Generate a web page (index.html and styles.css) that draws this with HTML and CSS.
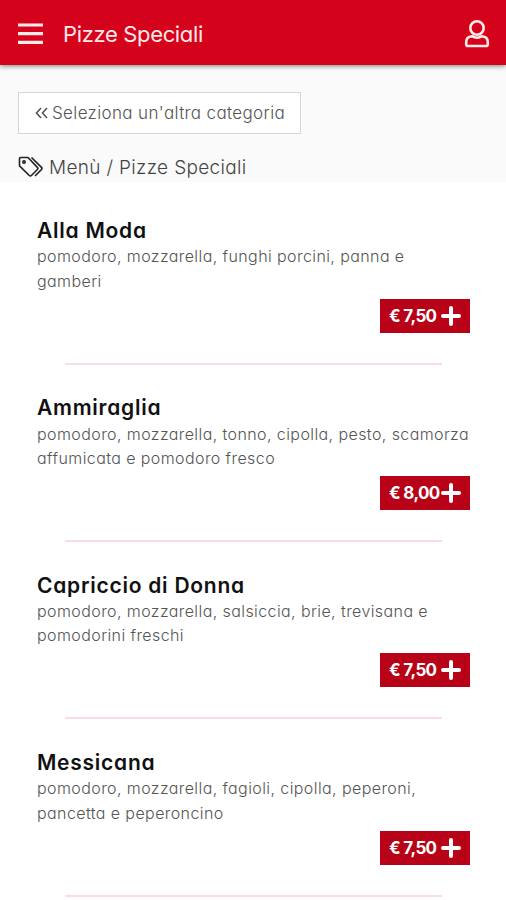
FILE: index.html
```html
<!DOCTYPE html>
<html lang="it">
<head>
<meta charset="UTF-8">
<meta name="viewport" content="width=device-width, initial-scale=1.0">
<title>Pizze Speciali</title>
<link rel="stylesheet" href="styles.css">
</head>
<body>
<header class="navbar">
  <svg class="icon-menu" viewBox="0 0 25 22"><path d="M0 2h25M0 10.7h25M0 19.4h25"/></svg>
  <h1>Pizze Speciali</h1>
  <svg class="icon-user" viewBox="0 0 26 30"><circle cx="13" cy="9" r="6.700"/><path d="M8 17.200C4.500 17.500 2.200 19.700 2.200 23v2.200c0 1.200.6 1.800 1.800 1.800h18c1.200 0 1.800-.6 1.800-1.800V23c0-3.300-2.300-5.500-5.800-5.800-3 1.800-7 1.800-10 0z"/></svg>
</header>
<div class="top">
  <a class="back" href="#"><svg class="icon-back" viewBox="0 0 13 12"><path d="M6 1L1.500 6 6 11M12 1L7.500 6l4.500 5"/></svg><span>Seleziona un'altra categoria</span></a>
  <div class="breadcrumb">
    <svg class="icon-tags" viewBox="0 0 26 22"><path d="M1.500 2.500v7.300L11.300 19.500c.7.7 1.400.7 2.100 0l6-6c.7-.7.7-1.400 0-2.100L10 1.500H2.500c-.7 0-1 .3-1 1z"/><path d="M13.500 1.500l10 9.900c.7.7.7 1.400 0 2.100L17 20"/><circle cx="6" cy="6" r="1.200"/></svg>
    <span>Menù / Pizze Speciali</span>
  </div>
</div>
<main class="menu">
  <div class="item">
    <h2>Alla Moda</h2>
    <p>pomodoro, mozzarella, funghi porcini, panna e<br>gamberi</p>
    <button class="price"><span>€ 7,50</span><svg class="icon-plus" viewBox="0 0 20 20"><path d="M10 2v16M2 10h16"/></svg></button>
  </div>
  <div class="item">
    <h2>Ammiraglia</h2>
    <p>pomodoro, mozzarella, tonno, cipolla, pesto, scamorza<br>affumicata e pomodoro fresco</p>
    <button class="price"><span>€ 8,00</span><svg class="icon-plus" viewBox="0 0 20 20"><path d="M10 2v16M2 10h16"/></svg></button>
  </div>
  <div class="item">
    <h2>Capriccio di Donna</h2>
    <p>pomodoro, mozzarella, salsiccia, brie, trevisana e<br>pomodorini freschi</p>
    <button class="price"><span>€ 7,50</span><svg class="icon-plus" viewBox="0 0 20 20"><path d="M10 2v16M2 10h16"/></svg></button>
  </div>
  <div class="item">
    <h2>Messicana</h2>
    <p>pomodoro, mozzarella, fagioli, cipolla, peperoni,<br>pancetta e peperoncino</p>
    <button class="price"><span>€ 7,50</span><svg class="icon-plus" viewBox="0 0 20 20"><path d="M10 2v16M2 10h16"/></svg></button>
  </div>
</main>
</body>
</html>
```
FILE: styles.css
```css
* {
  box-sizing: border-box;
}
body {
  margin: 0;
  height: 900px;
  overflow: hidden;
  display: flex;
  flex-direction: column;
  background-color: #ffffff;
  color: #444444;
  font-family: "Century Gothic", Inter, sans-serif;
  font-weight: 300;
  font-feature-settings: "cv11"; /* single-storey a */
}
svg {
  display: block;
  flex: none;
  fill: none;
  stroke: currentColor;
}
h1, h2, p {
  margin: 0;
  white-space: nowrap;
}
.navbar {
  position: relative;
  flex: none;
  height: 65px;
  padding: 3px 16px 0 18px;
  display: flex;
  align-items: center;
  background-color: #d5021c;
  color: #ffe9e9;
  box-shadow: 0 1px 5px rgba(0, 0, 0, 0.5);
}
.navbar h1 {
  margin-left: 20px;
  font-size: 22px;
  font-weight: 400;
  letter-spacing: -0.35px;
}
.icon-menu {
  width: 25px;
  height: 22px;
  stroke-width: 3.2;
}
.icon-user {
  width: 26px;
  height: 30px;
  margin-left: auto;
  stroke-width: 2.6;
}
.top {
  flex: none;
  height: 117px;
  padding: 27px 18px 0;
  background-color: #fafafa;
}
.back {
  width: 283px;
  height: 42px;
  padding-left: 16px;
  display: flex;
  align-items: center;
  border: 1px solid #d6d6d6;
  background-color: #ffffff;
  color: #555555;
  font-size: 17px;
  letter-spacing: 0.36px;
  white-space: nowrap;
  text-decoration: none;
}
.icon-back {
  width: 13px;
  height: 12px;
  margin-right: 4px;
  stroke-width: 1.6;
}
.breadcrumb {
  margin-top: 20px;
  height: 26px;
  display: flex;
  align-items: center;
  font-size: 19px;
  letter-spacing: 0.33px;
  white-space: nowrap;
}
.icon-tags {
  width: 26px;
  height: 22px;
  margin-right: 5px;
  color: #222222;
  stroke-width: 1.6;
}
.menu {
  padding: 35px 36px 0 37px;
}
.item {
  height: 177.3px;
  display: flex;
  flex-direction: column;
}
.item h2 {
  color: #111111;
  font-size: 21px;
  font-weight: 600;
  line-height: 27.4px;
  letter-spacing: 0.75px;
}
.item p {
  color: #555555;
  font-size: 16px;
  line-height: 24.4px;
  letter-spacing: 0.41px;
}
.price {
  align-self: flex-end;
  width: 90px;
  height: 34px;
  margin-top: 5.6px;
  padding: 0 9px;
  display: flex;
  align-items: center;
  justify-content: space-between;
  border: none;
  background-color: #b70218;
  color: #ffffff;
  font-family: inherit;
  font-feature-settings: inherit;
  font-size: 17px;
  font-weight: 700;
  letter-spacing: -0.65px;
  white-space: nowrap;
}
.icon-plus {
  width: 20px;
  height: 20px;
  stroke-width: 4;
  stroke-linecap: round;
}
/* separator between dishes */
.item::after {
  content: "";
  height: 2px;
  margin: 30px 28px 0;
  background-color: #fbdce2;
}
```
